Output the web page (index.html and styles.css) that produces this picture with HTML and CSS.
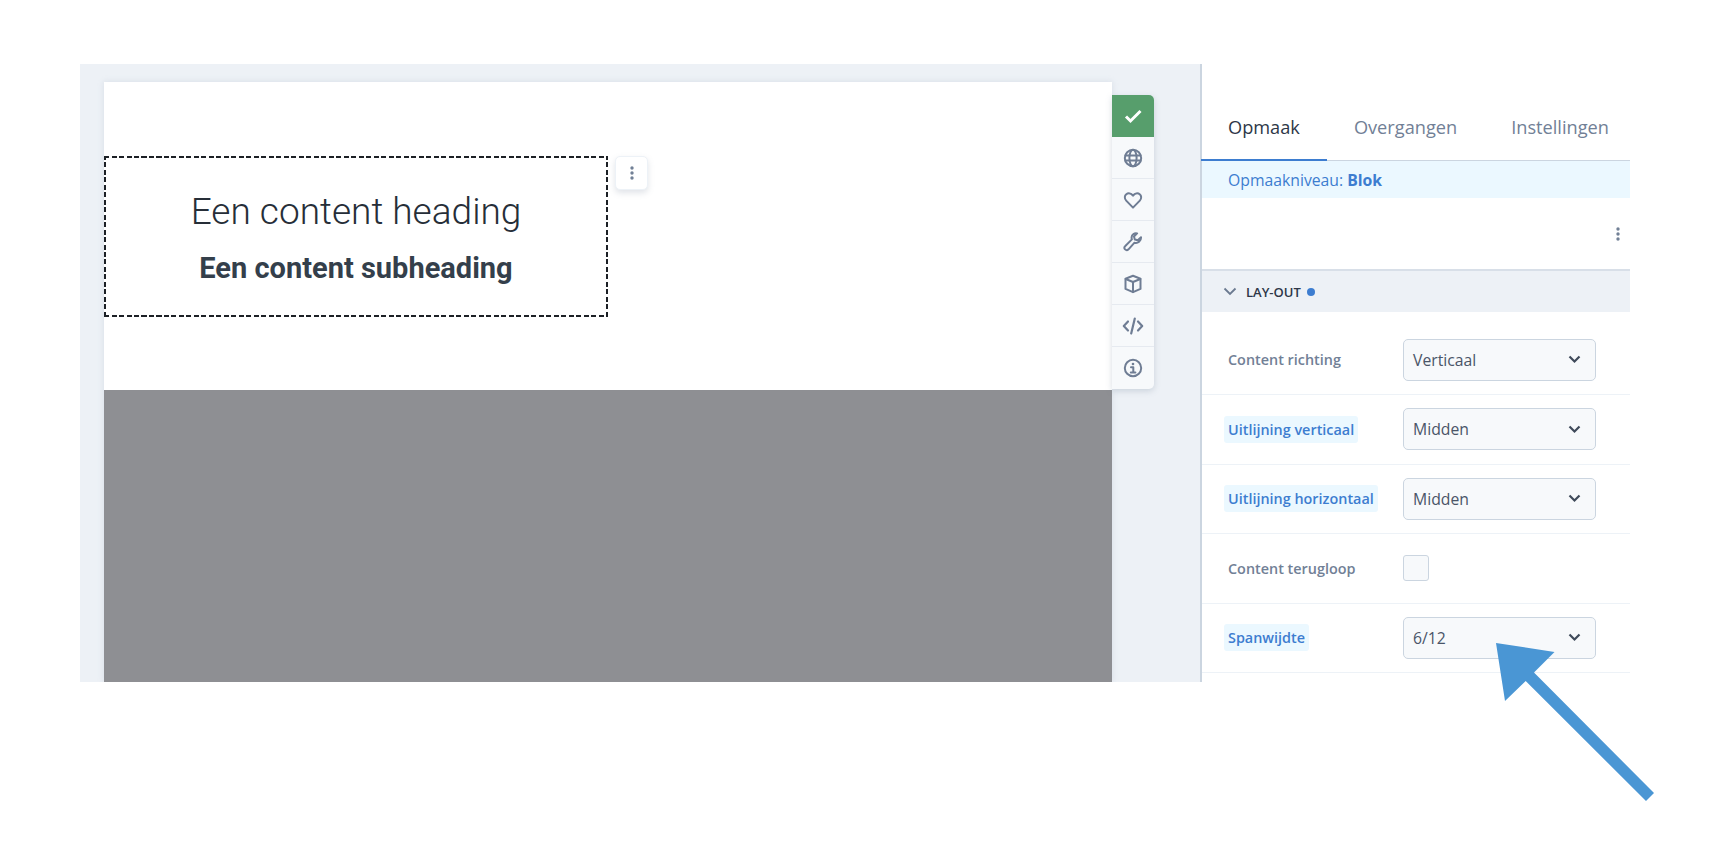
FILE: index.html
```html
<!DOCTYPE html>
<html lang="nl">
<head>
<meta charset="utf-8">
<title>Opmaak</title>
<link rel="stylesheet" href="styles.css">
</head>
<body>
<main class="app">
  <section class="canvas">
    <div class="page">
      <div class="hero">
        <div class="block">
          <h1 class="heading">Een content heading</h1>
          <h2 class="subheading">Een content subheading</h2>
          <button class="block-menu" aria-label="Menu">
            <svg width="4" height="14" viewBox="0 0 4 14"><circle cx="2" cy="2" r="1.7"/><circle cx="2" cy="7" r="1.7"/><circle cx="2" cy="12" r="1.7"/></svg>
          </button>
        </div>
      </div>
      <div class="gray"></div>
    </div>
    <nav class="toolbar">
      <div class="tool tool-active"><svg width="20" height="20" viewBox="0 0 20 20"><path d="M3 10.500l4.500 4.500L17.500 5" fill="none" stroke="#fff" stroke-width="3"/></svg></div>
      <div class="tool"><svg width="20" height="20" viewBox="0 0 20 20" class="ic"><circle cx="10" cy="10" r="8.200"/><ellipse cx="10" cy="10" rx="3.600" ry="8.200"/><path d="M2.400 7.400h15.200M2.400 12.600h15.200"/></svg></div>
      <div class="tool"><svg width="20" height="20" viewBox="0 0 20 20" class="ic"><path d="M10 17.600L3.200 10.600C1.200 8.500 1.500 5.600 3.300 4.200 5.200 2.700 8 3.100 10 5.600c2-2.500 4.800-2.900 6.700-1.400 1.800 1.400 2.100 4.300.1 6.400z"/></svg></div>
      <div class="tool"><svg width="20" height="20" viewBox="0 0 20 20" class="ic"><path d="M18 5.200l-3.200 3-3-.7-.8-3 3.100-3.100c-2.500-.7-5.400 1-5.500 4 0 .9.100 1.500.3 2L2.300 14c-1.100 1-1.100 2.400-.2 3.400.9.900 2.400.9 3.400-.1l6-6.600c3.300 1 6.800-1.700 6.500-5.500z"/></svg></div>
      <div class="tool"><svg width="20" height="20" viewBox="0 0 20 20" class="ic"><path d="M10 1.800l7.500 2.900v10.200L10 18.200l-7.500-3.300V4.700z"/><path d="M2.700 5l7.300 3 7.300-3M10 8v10"/></svg></div>
      <div class="tool"><svg width="22" height="20" viewBox="0 0 22 20" class="ic ic-thick"><path d="M6 5.500L1.800 10 6 14.500M16 5.500l4.200 4.500-4.200 4.500M12.800 2.500L9.200 17.500"/></svg></div>
      <div class="tool"><svg width="20" height="20" viewBox="0 0 20 20" class="ic"><circle cx="10" cy="10" r="8.200"/><circle cx="10" cy="6" r="1.300" class="dot"/><path d="M8 9.200h2.300v5M7.800 14.500h4.600"/></svg></div>
    </nav>
  </section>
  <aside class="panel">
    <div class="tabs">
      <span class="tab tab-active">Opmaak</span>
      <span class="tab">Overgangen</span>
      <span class="tab">Instellingen</span>
    </div>
    <div class="level">Opmaakniveau: <b>Blok</b></div>
    <div class="actions">
      <svg width="4" height="14" viewBox="0 0 4 14"><circle cx="2" cy="2" r="1.700"/><circle cx="2" cy="7" r="1.700"/><circle cx="2" cy="12" r="1.700"/></svg>
    </div>
    <div class="section-head">
      <svg width="14" height="9" viewBox="0 0 14 9"><path d="M1.500 1.500L7 7l5.500-5.500" fill="none" stroke="#6b7a90" stroke-width="1.800"/></svg>
      <span class="section-title">LAY-OUT</span>
      <i class="section-dot"></i>
    </div>
    <div class="row row-first">
      <span class="label">Content richting</span>
      <div class="select"><span>Verticaal</span><svg class="chev" width="13" height="9" viewBox="0 0 13 9"><path d="M1.500 1.500l5 5 5-5"/></svg></div>
    </div>
    <div class="row">
      <span class="label label-mark">Uitlijning verticaal</span>
      <div class="select"><span>Midden</span><svg class="chev" width="13" height="9" viewBox="0 0 13 9"><path d="M1.500 1.500l5 5 5-5"/></svg></div>
    </div>
    <div class="row">
      <span class="label label-mark">Uitlijning horizontaal</span>
      <div class="select"><span>Midden</span><svg class="chev" width="13" height="9" viewBox="0 0 13 9"><path d="M1.500 1.500l5 5 5-5"/></svg></div>
    </div>
    <div class="row">
      <span class="label">Content terugloop</span>
      <div class="check"></div>
    </div>
    <div class="row">
      <span class="label label-mark">Spanwijdte</span>
      <div class="select"><span>6/12</span><svg class="chev" width="13" height="9" viewBox="0 0 13 9"><path d="M1.500 1.500l5 5 5-5"/></svg></div>
    </div>
  </aside>
</main>
<svg class="arrow" width="1726" height="868" viewBox="0 0 1726 868"><polygon points="1496,643 1554.500,652 1534,672.500 1654,793 1646,801 1525.700,681 1505,701" fill="#4a96d4"/></svg>
</body>
</html>
```
FILE: styles.css
```css
* { box-sizing: border-box; }
html, body { margin: 0; height: 100%; }
body {
  background: #fff;
  padding: 64px 96px 0 80px;
  overflow: hidden;
  font-family: "Open Sans", sans-serif;
}
.app { display: flex; height: 618px; width: 1550px; }

.canvas {
  width: 1120px;
  flex: none;
  background: #edf1f6;
  display: flex;
  align-items: flex-start;
  padding: 18px 0 0 24px;
  height: 100%;
  overflow: hidden;
}
.page {
  width: 1008px;
  flex: none;
  height: 100%;
  display: flex;
  flex-direction: column;
  box-shadow: 0 0 6px rgba(160, 174, 192, .3);
}
.hero { height: 308px; flex: none; background: #fff; padding-top: 74px; }
.gray { flex: 1; background: #8e8f93; }

.block {
  position: relative;
  width: 504px;
  height: 161px;
  text-align: center;
  font-family: Roboto, sans-serif;
  padding-top: 34px;
  background:
    repeating-linear-gradient(90deg, #1c2025 0 5px, transparent 5px 7.500px) left top / 100% 2px no-repeat,
    repeating-linear-gradient(90deg, #1c2025 0 5px, transparent 5px 7.500px) left bottom / 100% 2px no-repeat,
    repeating-linear-gradient(0deg, #1c2025 0 5px, transparent 5px 7.500px) left top / 2px 100% no-repeat,
    repeating-linear-gradient(0deg, #1c2025 0 5px, transparent 5px 7.500px) right top / 2px 100% no-repeat;
}
.heading { margin: 0; font-size: 37px; line-height: 44px; font-weight: 300; color: #262e38; }
.subheading { margin: 18px 0 0; font-size: 29px; line-height: 32px; font-weight: 700; color: #343f4b; }
.block-menu {
  position: absolute;
  left: 511px;
  top: 0;
  width: 33px;
  height: 34px;
  padding: 0;
  display: flex;
  align-items: center;
  justify-content: center;
  background: #fff;
  border: 1px solid #edf2f7;
  border-radius: 5px;
  box-shadow: 0 3px 6px rgba(113, 128, 150, .22);
}
.block-menu svg, .actions svg { fill: #718096; }

.toolbar {
  width: 42px;
  flex: none;
  margin-top: 13px;
  border-radius: 0 5px 5px 0;
  overflow: hidden;
  background: #f7f9fb;
  box-shadow: 0 2px 6px rgba(113, 128, 150, .28);
}
.tool {
  height: 42px;
  display: flex;
  align-items: center;
  justify-content: center;
  border-bottom: 1px solid #e6eaf0;
}
.tool:last-child { border-bottom: 0; }
.tool-active { background: #579e6c; border-bottom: 0; }
.ic { fill: none; stroke: #6f7d94; stroke-width: 2; stroke-linejoin: round; stroke-linecap: round; }
.ic-thick { stroke-width: 2.200; }
.ic .dot { fill: #6f7d94; stroke: none; }

.panel {
  flex: 1;
  min-width: 0;
  background: #fff;
  border-left: 2px solid #cbd5e0;
}
.tabs { display: flex; height: 97px; margin-left: -1px; border-bottom: 1px solid #cbd5e0; }
.tab {
  height: 97px;
  padding: 51px 27px 0;
  font-size: 18.200px;
  line-height: 25px;
  color: #718096;
  border-bottom: 1px solid transparent;
}
.tab-active { color: #2d3748; border-bottom: 2px solid #3d7dd0; }
.level {
  height: 37px;
  background: #ebf8ff;
  color: #3d7dd0;
  font-size: 15.750px;
  line-height: 39px;
  padding-left: 26px;
}
.level b { font-weight: 700; }
.actions {
  height: 73px;
  display: flex;
  align-items: center;
  justify-content: flex-end;
  padding-right: 10px;
  border-bottom: 2px solid #d8dfe8;
}
.section-head {
  height: 41px;
  background: #edf1f6;
  display: flex;
  align-items: center;
  padding-left: 21px;
}
.section-title { margin-left: 9px; font-size: 13px; font-weight: 600; color: #2d3748; }
.section-dot { width: 8px; height: 8px; margin-left: 6px; border-radius: 50%; background: #3d7dd0; }

.row {
  height: 69.500px;
  display: grid;
  grid-template-columns: 175px 193px;
  align-items: center;
  justify-items: start;
  padding-left: 26px;
  border-bottom: 1px solid #edf2f7;
}
.row-first { height: 83px; padding-top: 13px; }
.label { font-size: 14.400px; font-weight: 600; color: #718096; }
.label-mark { color: #3d7dd0; background: #ebf8ff; border-radius: 3px; padding: 4px; margin-left: -4px; line-height: 19px; }
.select {
  width: 193px;
  height: 42px;
  display: flex;
  align-items: center;
  justify-content: space-between;
  padding: 0 14px 0 9px;
  background: #f7f9fb;
  border: 1px solid #cbd5e0;
  border-radius: 5px;
  font-size: 15.750px;
  color: #4a5568;
}
.chev { fill: none; stroke: #3f4a5a; stroke-width: 2.200; }
.check { width: 26px; height: 26px; background: #f7f9fb; border: 1px solid #cbd5e0; border-radius: 3px; }

.arrow { position: absolute; left: 0; top: 0; pointer-events: none; }
```
